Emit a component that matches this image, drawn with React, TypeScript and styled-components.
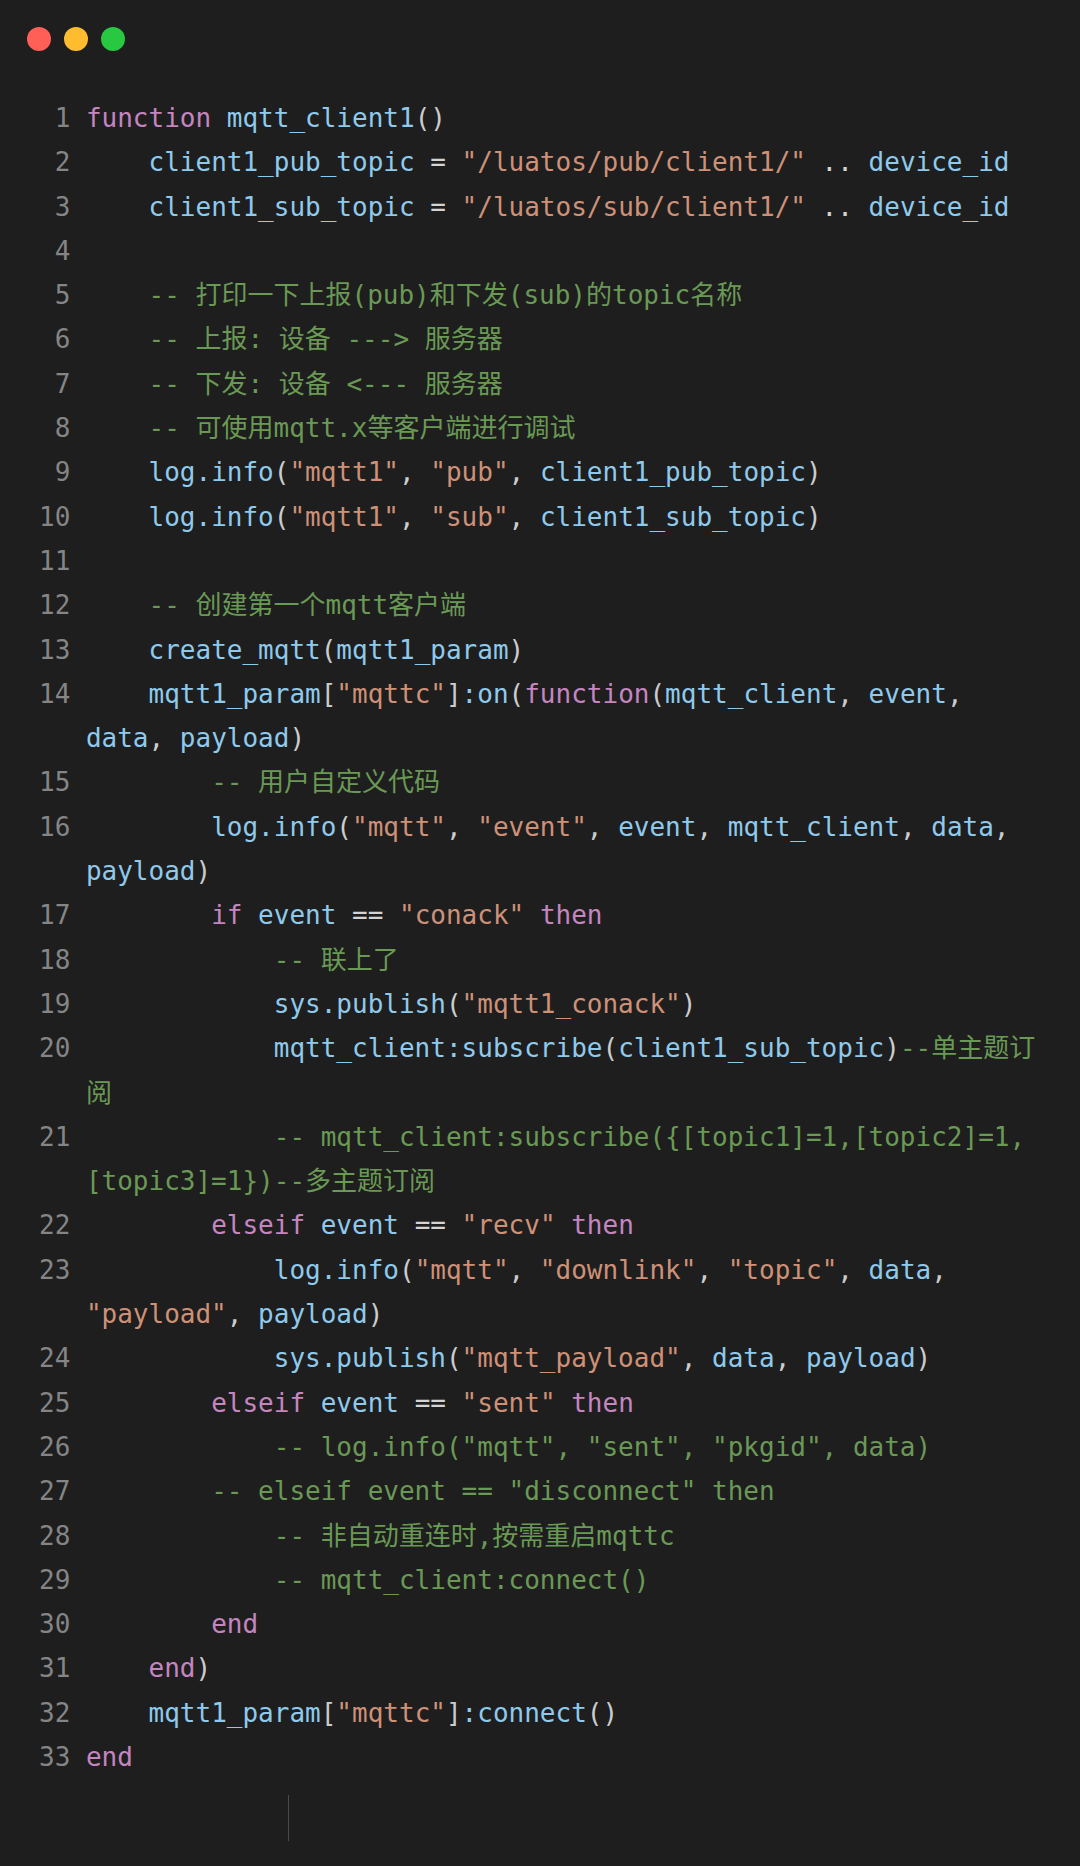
import React from "react";
import styled, { createGlobalStyle } from "styled-components";

type Kind = "k" | "v" | "s" | "c" | "p" | "t";
type Tok = [Kind, string];
type Line = Tok[][]; // visual rows of tokens

const GlobalStyle = createGlobalStyle`
  html, body {
    margin: 0;
    padding: 0;
    background: #1e1e1e;
  }
  body {
    min-height: 1866px;
  }
`;

const Window = styled.div`
  background: #1e1e1e;
  min-height: 1866px;
  box-sizing: border-box;
  padding: 27px 0 0 0;
  display: flex;
  flex-direction: column;
`;

const TitleBar = styled.div`
  display: flex;
  gap: 13px;
  padding-left: 27px;
  height: 24px;
`;

const Light = styled.span<{ $color: string }>`
  width: 24px;
  height: 24px;
  border-radius: 50%;
  background: ${(p) => p.$color};
  display: block;
`;

const Editor = styled.div`
  margin-top: 45px;
  display: grid;
  grid-template-columns: 31.3px 1fr;
  column-gap: 15.6px;
  padding-left: 39px;
  font-family: "DejaVu Sans Mono", "Noto Sans CJK SC", monospace;
  font-size: 26px;
  line-height: 44.3px;
`;

const LineNo = styled.div`
  color: #858585;
  text-align: right;
  white-space: pre;
`;

const Code = styled.div`
  display: flex;
  flex-direction: column;
`;

const Row = styled.div`
  white-space: pre;
  height: 44.3px;
`;

const colors: Record<Kind, string> = {
  k: "#c586c0",
  v: "#8fcaec",
  s: "#ce9178",
  c: "#6a9955",
  p: "#cccccc",
  t: "#d4d4d4",
};

const Tk = styled.span<{ $kind: Kind }>`
  color: ${(p) => colors[p.$kind]};
`;

const Footer = styled.div`
  padding-top: 16px;
  padding-left: 288px;
`;

const Caret = styled.div`
  width: 1px;
  height: 46px;
  background: #4a4a4a;
`;

const I4 = "    ";
const I8 = "        ";
const I12 = "            ";

const lines: Line[] = [
  [[["k", "function"], ["t", " "], ["v", "mqtt_client1"], ["p", "()"]]],
  [[["t", I4], ["v", "client1_pub_topic"], ["t", " = "], ["s", '"/luatos/pub/client1/"'], ["t", " .. "], ["v", "device_id"]]],
  [[["t", I4], ["v", "client1_sub_topic"], ["t", " = "], ["s", '"/luatos/sub/client1/"'], ["t", " .. "], ["v", "device_id"]]],
  [[["t", ""]]],
  [[["t", I4], ["c", "-- 打印一下上报(pub)和下发(sub)的topic名称"]]],
  [[["t", I4], ["c", "-- 上报: 设备 ---> 服务器"]]],
  [[["t", I4], ["c", "-- 下发: 设备 <--- 服务器"]]],
  [[["t", I4], ["c", "-- 可使用mqtt.x等客户端进行调试"]]],
  [[["t", I4], ["v", "log.info"], ["p", "("], ["s", '"mqtt1"'], ["p", ", "], ["s", '"pub"'], ["p", ", "], ["v", "client1_pub_topic"], ["p", ")"]]],
  [[["t", I4], ["v", "log.info"], ["p", "("], ["s", '"mqtt1"'], ["p", ", "], ["s", '"sub"'], ["p", ", "], ["v", "client1_sub_topic"], ["p", ")"]]],
  [[["t", ""]]],
  [[["t", I4], ["c", "-- 创建第一个mqtt客户端"]]],
  [[["t", I4], ["v", "create_mqtt"], ["p", "("], ["v", "mqtt1_param"], ["p", ")"]]],
  [
    [["t", I4], ["v", "mqtt1_param"], ["p", "["], ["s", '"mqttc"'], ["p", "]"], ["v", ":on"], ["p", "("], ["k", "function"], ["p", "("], ["v", "mqtt_client"], ["p", ", "], ["v", "event"], ["p", ","]],
    [["v", "data"], ["p", ", "], ["v", "payload"], ["p", ")"]],
  ],
  [[["t", I8], ["c", "-- 用户自定义代码"]]],
  [
    [["t", I8], ["v", "log.info"], ["p", "("], ["s", '"mqtt"'], ["p", ", "], ["s", '"event"'], ["p", ", "], ["v", "event"], ["p", ", "], ["v", "mqtt_client"], ["p", ", "], ["v", "data"], ["p", ","]],
    [["v", "payload"], ["p", ")"]],
  ],
  [[["t", I8], ["k", "if"], ["t", " "], ["v", "event"], ["t", " == "], ["s", '"conack"'], ["t", " "], ["k", "then"]]],
  [[["t", I12], ["c", "-- 联上了"]]],
  [[["t", I12], ["v", "sys.publish"], ["p", "("], ["s", '"mqtt1_conack"'], ["p", ")"]]],
  [
    [["t", I12], ["v", "mqtt_client:subscribe"], ["p", "("], ["v", "client1_sub_topic"], ["p", ")"], ["c", "--单主题订"]],
    [["c", "阅"]],
  ],
  [
    [["t", I12], ["c", "-- mqtt_client:subscribe({[topic1]=1,[topic2]=1,"]],
    [["c", "[topic3]=1})--多主题订阅"]],
  ],
  [[["t", I8], ["k", "elseif"], ["t", " "], ["v", "event"], ["t", " == "], ["s", '"recv"'], ["t", " "], ["k", "then"]]],
  [
    [["t", I12], ["v", "log.info"], ["p", "("], ["s", '"mqtt"'], ["p", ", "], ["s", '"downlink"'], ["p", ", "], ["s", '"topic"'], ["p", ", "], ["v", "data"], ["p", ","]],
    [["s", '"payload"'], ["p", ", "], ["v", "payload"], ["p", ")"]],
  ],
  [[["t", I12], ["v", "sys.publish"], ["p", "("], ["s", '"mqtt_payload"'], ["p", ", "], ["v", "data"], ["p", ", "], ["v", "payload"], ["p", ")"]]],
  [[["t", I8], ["k", "elseif"], ["t", " "], ["v", "event"], ["t", " == "], ["s", '"sent"'], ["t", " "], ["k", "then"]]],
  [[["t", I12], ["c", '-- log.info("mqtt", "sent", "pkgid", data)']]],
  [[["t", I8], ["c", '-- elseif event == "disconnect" then']]],
  [[["t", I12], ["c", "-- 非自动重连时,按需重启mqttc"]]],
  [[["t", I12], ["c", "-- mqtt_client:connect()"]]],
  [[["t", I8], ["k", "end"]]],
  [[["t", I4], ["k", "end"], ["p", ")"]]],
  [[["t", I4], ["v", "mqtt1_param"], ["p", "["], ["s", '"mqttc"'], ["p", "]"], ["v", ":connect"], ["p", "()"]]],
  [[["k", "end"]]],
];

export default function App() {
  return (
    <>
      <GlobalStyle />
      <Window>
        <TitleBar>
          <Light $color="#ff5f57" />
          <Light $color="#febc2e" />
          <Light $color="#28c840" />
        </TitleBar>
        <Editor>
          {lines.map((rows, i) => (
            <React.Fragment key={i}>
              <LineNo>{i + 1}</LineNo>
              <Code>
                {rows.map((toks, j) => (
                  <Row key={j}>
                    {toks.map(([k, text], n) => (
                      <Tk key={n} $kind={k}>
                        {text}
                      </Tk>
                    ))}
                  </Row>
                ))}
              </Code>
            </React.Fragment>
          ))}
        </Editor>
        <Footer>
          <Caret />
        </Footer>
      </Window>
    </>
  );
}
